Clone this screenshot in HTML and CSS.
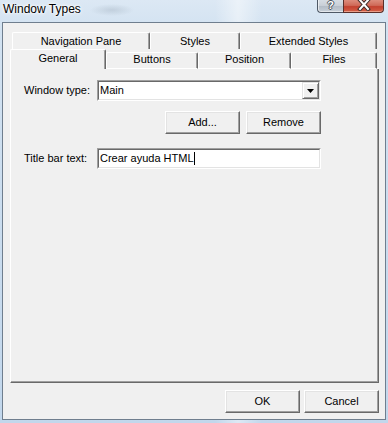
FILE: index.html
```html
<!DOCTYPE html>
<html>
<head>
<meta charset="utf-8">
<title>Window Types</title>
<link rel="stylesheet" href="styles.css">
</head>
<body>
<div class="window">
  <div class="titlebar">
    <span class="title">Window Types</span>
    <div class="caption">
      <div class="cbtn help"><span class="qmark">?</span></div>
      <div class="cbtn close">
        <svg width="14" height="11" viewBox="0 0 14 11"><path d="M3 0 L11 9 M11 0 L3 9" stroke="#3a2a28" stroke-width="4" stroke-linecap="square"/><path d="M3 0 L11 9 M11 0 L3 9" stroke="#fff" stroke-width="2" stroke-linecap="square"/></svg>
      </div>
    </div>
  </div>
  <div class="client">
    <div class="tabrow back">
      <div class="tab t-nav">Navigation Pane</div>
      <div class="tab t-styles">Styles</div>
      <div class="tab t-ext">Extended Styles</div>
    </div>
    <div class="tabrow front">
      <div class="tab sel t-gen">General</div>
      <div class="tab t-btn">Buttons</div>
      <div class="tab t-pos">Position</div>
      <div class="tab t-files">Files</div>
      <div class="fill"></div>
    </div>
    <div class="panel">
      <div class="form">
        <div class="label">Window type:</div>
        <div class="sunken">
          <div class="sunken-inner combo">
            <span class="value">Main</span>
            <div class="dropbtn"><svg width="7" height="4" viewBox="0 0 7 4"><polygon points="0,0 7,0 3.5,4" fill="#000"/></svg></div>
          </div>
        </div>
        <div class="btnrow">
          <div class="button">Add...</div>
          <div class="button">Remove</div>
        </div>
        <div class="label">Title bar text:</div>
        <div class="sunken">
          <div class="sunken-inner field">
            <span class="value">Crear ayuda HTML</span><span class="caret"></span>
          </div>
        </div>
      </div>
    </div>
    <div class="footer">
      <div class="button">OK</div>
      <div class="button">Cancel</div>
    </div>
  </div>
</div>
</body>
</html>
```
FILE: styles.css
```css
* { box-sizing: border-box; }
html, body { margin: 0; padding: 0; }
body {
  width: 388px;
  height: 423px;
  overflow: hidden;
  font-family: "Liberation Sans", Arial, sans-serif;
  font-size: 11px;
  color: #000;
}
.window {
  width: 388px;
  height: 423px;
  display: flex;
  flex-direction: column;
  background:
    radial-gradient(ellipse 22px 6px at 112px 10px, rgba(150,165,180,.35), rgba(150,165,180,0)),
    linear-gradient(90deg, rgba(255,255,255,0) 215px, rgba(255,255,255,.45) 238px, rgba(255,255,255,0) 262px),
    linear-gradient(180deg, #dce8f4 0, #d2e2f1 30px, #c2d7ec 100%);
}
.titlebar {
  height: 22px;
  flex: none;
  display: flex;
  justify-content: space-between;
  align-items: flex-start;
  padding: 0 4px 0 3px;
}
.title {
  font-size: 12px;
  line-height: 14px;
  margin-top: 2px;
  text-shadow: 0 0 5px #fff, 0 0 3px #fff, 0 0 2px #fff;
}
.caption { display: flex; }
.cbtn {
  height: 13px;
  border: 1px solid #4f5966;
  border-top: none;
  display: flex;
  justify-content: center;
  align-items: flex-start;
}
.help {
  width: 26px;
  border-right: none;
  border-bottom-left-radius: 4px;
  background: linear-gradient(180deg, #d6dce3 0, #c8ced6 50%, #b3bcc6 51%, #c7cfd8 100%);
  box-shadow: inset 1px 0 rgba(255,255,255,.6), inset 0 -1px rgba(255,255,255,.5);
}
.qmark {
  font-weight: bold;
  font-size: 11px;
  line-height: 11px;
  margin-top: 0;
  color: #fff;
  text-shadow: -1px 0 #4a525c, 1px 0 #4a525c, 0 1px #4a525c, 0 -1px #4a525c;
}
.close {
  width: 41px;
  border-color: #5a2f2a;
  border-bottom-right-radius: 4px;
  background: linear-gradient(180deg, #dd8c7c 0, #cf6a58 45%, #c3412f 55%, #d46048 100%);
  box-shadow: inset 0 -1px rgba(255,220,200,.5);
}
.close svg { display: block; margin-top: 0; }

.client {
  flex: 1;
  margin: 0 2px 3px 2px;
  border: 1px solid #6f7e8e;
  background: #f0f0f0;
  display: flex;
  flex-direction: column;
  padding: 9px 6px 6px 7px;
}
.tabrow { display: flex; flex: none; }
.back { height: 17px; margin: 0 2px; }
.front { height: 20px; align-items: flex-start; }
.tab {
  border-top: 1px solid #fff;
  border-left: 1px solid #fff;
  border-right: 1px solid #696969;
  box-shadow: inset -1px 0 #a0a0a0;
  border-top-left-radius: 2px;
  border-top-right-radius: 2px;
  text-align: center;
  line-height: 13px;
  white-space: nowrap;
  background: #f0f0f0;
}
.back .tab { height: 17px; padding-top: 2px; }
.front .tab {
  margin-top: 3px;
  height: 17px;
  border-bottom: 1px solid #fff;
  padding-top: 0;
}
.front .tab.sel {
  margin-top: 0;
  height: 20px;
  border-bottom: none;
  padding-top: 2px;
}
.t-nav { width: 138px; }
.t-styles { width: 90px; }
.t-ext { width: 137px; }
.t-gen { width: 96px; }
.t-btn { width: 92px; }
.t-pos { width: 93px; }
.t-files { width: 86px; }
.fill { flex: 1; align-self: stretch; border-bottom: 1px solid #fff; }

.panel {
  flex: 1;
  border-left: 1px solid #fff;
  border-right: 1px solid #696969;
  border-bottom: 1px solid #696969;
  box-shadow: inset -1px -1px #a0a0a0;
  padding: 11px 0 0 13px;
}
.form {
  display: grid;
  grid-template-columns: 73px 224px;
  grid-template-rows: 21px auto 21px;
}
.label { align-self: center; line-height: 13px; white-space: nowrap; }
.btnrow {
  grid-column: 2;
  display: flex;
  justify-content: flex-end;
  gap: 6px;
  margin: 10px 0 14px;
}
.button {
  width: 75px;
  height: 23px;
  border: 1px solid;
  border-color: #fff #696969 #696969 #fff;
  box-shadow: inset -1px -1px #a0a0a0, inset 1px 1px #e3e3e3;
  background: #f0f0f0;
  display: flex;
  align-items: center;
  justify-content: center;
  line-height: 13px;
}
.sunken {
  border: 1px solid;
  border-color: #a0a0a0 #fff #fff #a0a0a0;
  height: 21px;
}
.sunken-inner {
  height: 100%;
  border: 1px solid;
  border-color: #696969 #e3e3e3 #e3e3e3 #696969;
  background: #fff;
  display: flex;
  align-items: center;
  padding-left: 1px;
  line-height: 13px;
}
.combo .value { flex: 1; }
.dropbtn {
  width: 17px;
  height: 17px;
  align-self: stretch;
  border: 1px solid;
  border-color: #e3e3e3 #696969 #696969 #e3e3e3;
  box-shadow: inset 1px 1px #fff, inset -1px -1px #a0a0a0;
  background: #f0f0f0;
  display: flex;
  align-items: center;
  justify-content: center;
}
.dropbtn svg { display: block; }
.field .value { white-space: nowrap; }
.caret {
  display: inline-block;
  width: 1px;
  height: 13px;
  background: #000;
}
.footer {
  flex: none;
  display: flex;
  justify-content: flex-end;
  gap: 4px;
  margin-top: 7px;
}
```
